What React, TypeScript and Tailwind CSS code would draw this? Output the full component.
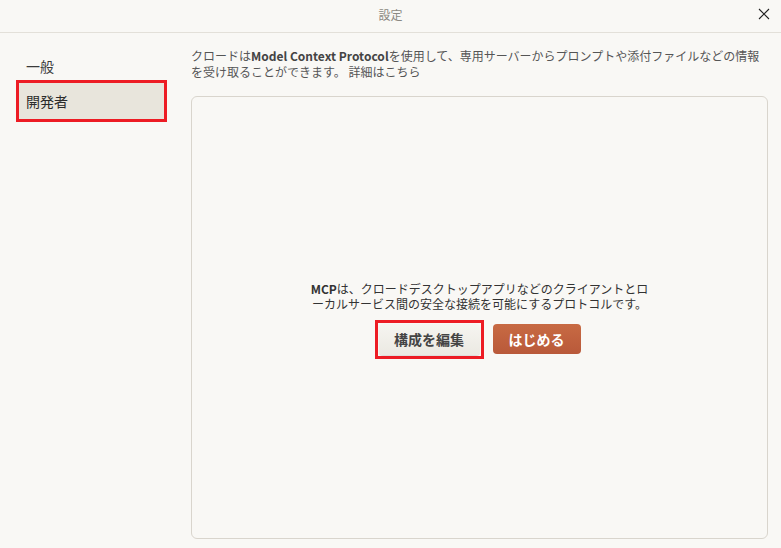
import React from 'react';

const FONT = '"Noto Sans CJK JP", "Noto Sans", sans-serif';

const App = () => {
    const navItems = [
        { label: "一般", active: false },
        { label: "開発者", active: true },
    ];

    return (
        <div
            className="w-[781px] h-[548px] bg-[#f9f8f5] text-[#333] flex flex-col overflow-hidden"
            style={{ fontFamily: FONT }}
        >
            {/* title bar */}
            <header className="h-[33px] shrink-0 border-b border-[#e3e0d9] flex items-center justify-center relative">
                <span className="text-[12px] text-[#8b8882] leading-none -mt-[3px]">設定</span>
                <button className="absolute right-[10px] top-[7px] w-[14px] h-[14px] flex items-center justify-center text-[#222]">
                    <svg width="12" height="12" viewBox="0 0 12 12" fill="none" stroke="currentColor" strokeWidth="1.1">
                        <path d="M1 1 L11 11 M11 1 L1 11" />
                    </svg>
                </button>
            </header>

            <div className="flex flex-1 min-h-0">
                {/* sidebar */}
                <nav className="w-[191px] shrink-0 pt-[15px] pl-[19px] pr-[27px] flex flex-col">
                    {navItems.map((item) => (
                        <div
                            key={item.label}
                            className={`h-9 px-[7px] flex items-center text-[14px] ${item.active
                                ? "bg-[#e8e5dc] text-[#2b2b2b] outline-[3px] outline-solid outline-[#ed1c24]"
                                : "text-[#3a3a3a] -mb-px"
                                }`}
                        >
                            {item.label}
                        </div>
                    ))}
                </nav>

                {/* main */}
                <main className="flex-1 min-w-0 pt-[15px] pr-[13px] pb-[9px] flex flex-col">
                    <p className="text-[12px] leading-[16px] text-[#555] pr-[4px]">
                        クロードは<span className="font-bold text-[#444]">Model Context Protocol</span>を使用して、専用サーバーからプロンプトや添付ファイルなどの情報を受け取ることができます。 詳細はこちら
                    </p>

                    <section className="mt-[16px] flex-1 border border-[#d9d5cd] rounded-[6px] flex flex-col items-center justify-center">
                        <p className="w-[344px] text-center text-[12px] leading-[15px] text-[#333]">
                            <span className="font-bold">MCP</span>は、クロードデスクトップアプリなどのクライアントとローカルサービス間の安全な接続を可能にするプロトコルです。
                        </p>
                        <div className="mt-[13px] flex items-center gap-[13px]">
                            <span className="inline-flex -m-[4px] p-[1px] border-[3px] border-[#ed1c24]">
                                <button className="w-[101px] h-[31px] rounded-[4px] bg-gradient-to-b from-[#f6f5f1] to-[#ebe9e2] shadow-[0_1px_1px_rgba(0,0,0,0.12)] text-[14px] font-bold text-[#444]">
                                    構成を編集
                                </button>
                            </span>
                            <button className="w-[88px] h-[30px] rounded-[4px] bg-gradient-to-b from-[#c86a43] to-[#b9593a] text-white text-[14px] font-bold">
                                はじめる
                            </button>
                        </div>
                    </section>
                </main>
            </div>
        </div>
    );
};

export default App;
